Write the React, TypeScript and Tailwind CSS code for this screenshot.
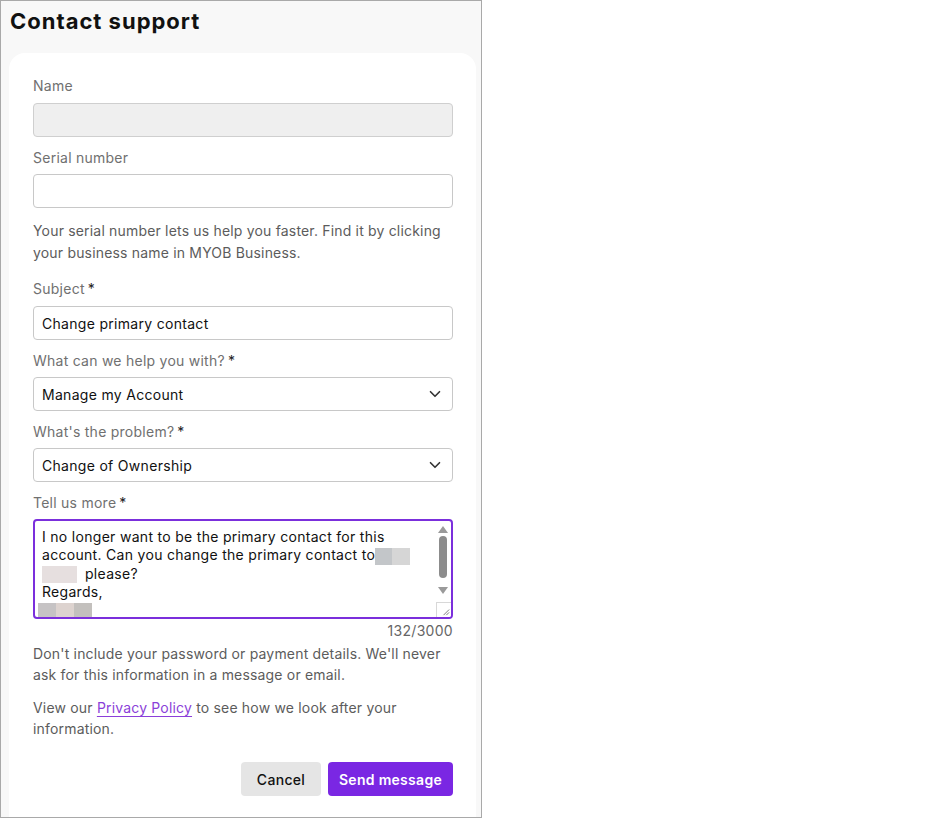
import { ChevronDown } from "lucide-react"

const font = { fontFamily: "Inter, 'Noto Sans', sans-serif" }

function Label({ text, required }: { text: string; required?: boolean }) {
  return (
    <div className="h-5 text-[14px] leading-5 tracking-[0.25px] text-[#707070]">
      {text}
      {required && <span className="ml-[3px] text-[#222]">*</span>}
    </div>
  )
}

function Select({ value }: { value: string }) {
  return (
    <div className="mt-[6px] flex h-[34px] items-center justify-between rounded-[4px] border border-[#c8c8c8] bg-white pl-2 pr-[8px] text-[14px] tracking-[0.3px] text-[#111]">
      <span>{value}</span>
      <ChevronDown className="h-[18px] w-[18px] text-[#333]" strokeWidth={2.2} />
    </div>
  )
}

function Blur({ w, colors }: { w: number[]; colors: string[] }) {
  return (
    <span className="inline-flex h-[17px] align-middle">
      {w.map((width, i) => (
        <span key={i} className="h-full" style={{ width, background: colors[i] }} />
      ))}
    </span>
  )
}

export default function App() {
  return (
    <div className="h-[818px] w-[482px] overflow-hidden border border-[#a9a9a9] bg-[#f8f8f8]" style={font}>
      <h1 className="pl-[9px] pt-[6px] text-[22px] font-bold leading-7 tracking-[1px] text-[#111]">
        Contact support
      </h1>

      <div className="ml-2 mr-[5px] mt-[18px] h-[800px] rounded-2xl bg-white pl-6 pr-[23px] pt-[23px]">
        <Label text="Name" />
        <div className="mt-[7px] h-[34px] rounded-[4px] border border-[#cfcfcf] bg-[#efefef]" />

        <div className="mt-[11px]">
          <Label text="Serial number" />
        </div>
        <div className="mt-[6px] h-[34px] rounded-[4px] border border-[#c8c8c8] bg-white" />
        <p className="mt-3 text-[14px] leading-[22px] tracking-[0.18px] text-[#5c5c5c]">
          Your serial number lets us help you faster. Find it by clicking your business name in MYOB Business.
        </p>

        <div className="mt-[15px]">
          <Label text="Subject" required />
        </div>
        <div className="mt-[7px] flex h-[34px] items-center rounded-[4px] border border-[#c8c8c8] bg-white px-2 text-[14px] tracking-[0.3px] text-[#111]">
          Change primary contact
        </div>

        <div className="mt-[11px]">
          <Label text="What can we help you with?" required />
        </div>
        <Select value="Manage my Account" />

        <div className="mt-[11px]">
          <Label text="What's the problem?" required />
        </div>
        <Select value="Change of Ownership" />

        <div className="mt-[11px]">
          <Label text="Tell us more" required />
        </div>
        <div className="relative mt-[6px] h-[100px] overflow-hidden rounded-[4px] border-2 border-[#7b2fdc] bg-white pl-[7px] pr-6 pt-[7px] text-[14px] leading-[18px] tracking-[0.3px] text-[#111]">
          <div>I no longer want to be the primary contact for this</div>
          <div>
            account. Can you change the primary contact to
            <Blur w={[17, 18]} colors={["#c3c6c9", "#d6d6d6"]} />
          </div>
          <div>
            <Blur w={[35]} colors={["#e6dfdf"]} />
            <span className="ml-[8px]">please?</span>
          </div>
          <div>Regards,</div>
          <div className="-ml-[4px]">
            <Blur w={[18, 18, 18]} colors={["#c6c3c4", "#ddd3cf", "#c3c0bd"]} />
          </div>

          {/* scrollbar */}
          <div className="absolute right-[1px] top-0 flex h-full w-[14px] flex-col items-center">
            <div className="mt-[5px] h-0 w-0 border-x-[5px] border-b-[7px] border-x-transparent border-b-[#9a9a9a]" />
            <div className="mt-[3px] h-[42px] w-[8px] rounded-full bg-[#8c8c8c]" />
            <div className="mt-[9px] h-0 w-0 border-x-[5px] border-t-[7px] border-x-transparent border-t-[#9a9a9a]" />
          </div>
          <div className="absolute bottom-0 right-0 h-[15px] w-[15px] border-l border-t border-[#d8d8d8] bg-white">
            <svg viewBox="0 0 15 15" className="h-full w-full">
              <path d="M13 7 L7 13 M13 10 L10 13" stroke="#777" strokeWidth="1" />
            </svg>
          </div>
        </div>
        <div className="mt-[2px] text-right text-[14px] leading-5 tracking-[0.3px] text-[#666]">132/3000</div>

        <p className="mt-[2px] text-[14px] leading-[21px] tracking-[0.18px] text-[#5c5c5c]">
          Don't include your password or payment details. We'll never ask for this information in a message or email.
        </p>
        <p className="mt-[12px] text-[14px] leading-[21px] tracking-[0.18px] text-[#5c5c5c]">
          View our{" "}
          <span className="text-[#8b3fd9] underline decoration-[#8b3fd9] underline-offset-[3px]">Privacy Policy</span>{" "}
          to see how we look after your information.
        </p>

        <div className="mt-[23px] flex justify-end gap-[7px]">
          <button className="h-[34px] w-[80px] rounded-[4px] bg-[#e5e5e5] text-[14px] font-medium tracking-[0.3px] text-[#111]">
            Cancel
          </button>
          <button className="h-[34px] w-[125px] rounded-[4px] bg-[#7a27e3] text-[14px] font-semibold tracking-[0.3px] text-white">
            Send message
          </button>
        </div>
      </div>
    </div>
  )
}
